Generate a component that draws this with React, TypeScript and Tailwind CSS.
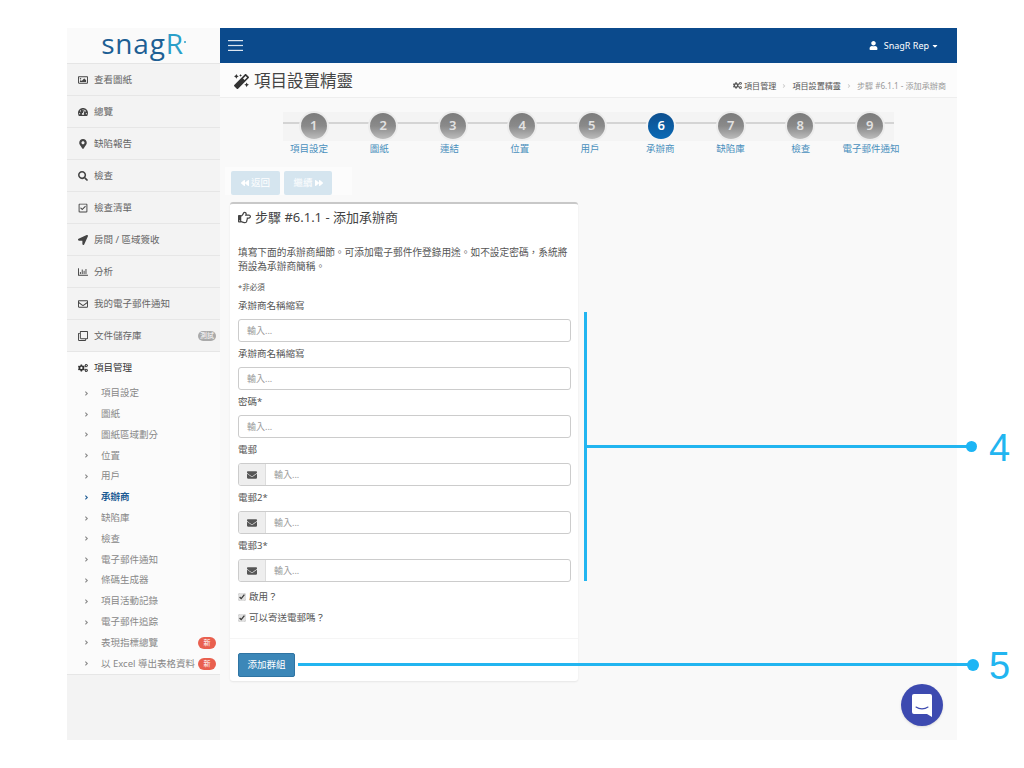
/* Add contractor step of the project wizard, with annotation callouts */
import {
  FaRegImage, FaTachometerAlt, FaMapMarkerAlt, FaSearch, FaRegCheckSquare, FaLocationArrow,
  FaRegChartBar, FaRegEnvelope, FaRegClone, FaCogs, FaMagic, FaRegHandPointRight, FaEnvelope,
  FaUser, FaCaretDown, FaAngleRight, FaBackward, FaForward,
} from "react-icons/fa";

const FONT = "font-['Noto_Sans','Noto_Sans_CJK_TC',sans-serif]";

const MENU = [
  { label: "查看圖紙", icon: FaRegImage },
  { label: "總覽", icon: FaTachometerAlt },
  { label: "缺陷報告", icon: FaMapMarkerAlt },
  { label: "檢查", icon: FaSearch },
  { label: "檢查清單", icon: FaRegCheckSquare },
  { label: "房間 / 區域簽收", icon: FaLocationArrow },
  { label: "分析", icon: FaRegChartBar },
  { label: "我的電子郵件通知", icon: FaRegEnvelope },
  { label: "文件儲存庫", icon: FaRegClone, badge: "測試" },
];

const SUBMENU = [
  { label: "項目設定" },
  { label: "圖紙" },
  { label: "圖紙區域劃分" },
  { label: "位置" },
  { label: "用戶" },
  { label: "承辦商", active: true },
  { label: "缺陷庫" },
  { label: "檢查" },
  { label: "電子郵件通知" },
  { label: "條碼生成器" },
  { label: "項目活動記錄" },
  { label: "電子郵件追踪" },
  { label: "表現指標總覽", isNew: true },
  { label: "以 Excel 導出表格資料", isNew: true },
];

const STEPS = ["項目設定", "圖紙", "連結", "位置", "用戶", "承辦商", "缺陷庫", "檢查", "電子郵件通知"];

function Sidebar() {
  return (
    <aside className="w-[153px] shrink-0 bg-[#f3f3f3]">
      <div className="h-9 flex items-center justify-center bg-[#fafafa] border-b border-[#e5e5e5]">
        <span className="text-[28px] leading-none tracking-[0.8px] text-[#1d5f94] font-['Open_Sans',sans-serif] -mt-[6px]">
          snag<span className="text-[#2a9fc9]">R</span>
        </span>
        <span className="w-[2px] h-[2px] rounded-full bg-[#2a9fc9] -mt-2" />
      </div>
      {MENU.map((m) => (
        <div key={m.label} className="h-8 flex items-center pl-[11px] pr-[4px] pt-[1px] border-b border-[#e6e6e6] text-[#666]">
          <m.icon className="w-[10px] h-[10px] text-[#444] shrink-0" />
          <span className="ml-[6px] text-[9.5px]">{m.label}</span>
          {m.badge && (
            <span className="ml-auto w-[18px] h-[10px] rounded-full bg-[#aaa] text-white text-[7px] leading-[10px] text-center">{m.badge}</span>
          )}
        </div>
      ))}
      <div className="bg-[#fbfbfb] border-b border-[#e6e6e6]">
        <div className="h-8 flex items-center pl-[11px] text-[#333]">
          <FaCogs className="w-[10px] h-[10px] text-[#333] shrink-0" />
          <span className="ml-[6px] text-[9.5px]">項目管理</span>
        </div>
        <ul className="-mt-[1px]">
          {SUBMENU.map((s) => (
            <li key={s.label} className={`h-[20.8px] flex items-center pl-[16px] pr-[4px] text-[9.5px] ${s.active ? "text-[#1d5b94] font-bold" : "text-[#888]"}`}>
              <FaAngleRight className="w-[7px] h-[7px] shrink-0" />
              <span className="ml-[11px] whitespace-nowrap">{s.label}</span>
              {s.isNew && (
                <span className="ml-auto w-[18px] h-[12px] rounded-full bg-[#e9604f] text-white text-[7px] leading-[12px] text-center shrink-0">新</span>
              )}
            </li>
          ))}
        </ul>
      </div>
    </aside>
  );
}

function Wizard() {
  return (
    <div className="relative pt-[15px] h-[69px]">
      <div className="absolute left-[63px] top-[14px] w-[611px] h-[29px] bg-[#f4f4f4]" />
      <div className="absolute left-[63px] top-[24px] w-[611px] h-[2px] bg-[#d4d4d4]" />
      <div className="relative grid grid-cols-[repeat(9,69.5px)] ml-[59px]">
        {STEPS.map((s, i) => (
          <div key={s} className="flex justify-center">
            <div
              className={`w-[26px] h-[26px] rounded-full ring-2 flex items-center justify-center text-[13px] font-semibold ${
                i === 5
                  ? "ring-[#f5f5f5] text-white bg-linear-to-b from-[#0d4f8f] to-[#0a6ab5]"
                  : "ring-[#ececec] text-[#e2e2e2] bg-linear-to-b from-[#7c7c7c] via-[#8a8a8a] to-[#bdbdbd]"
              }`}
            >
              {i + 1}
            </div>
          </div>
        ))}
      </div>
      <div className="relative grid grid-cols-[repeat(9,70.25px)] ml-[54px] mt-[3px]">
        {STEPS.map((s) => (
          <div key={s} className="text-center text-[9.5px] leading-[14px] text-[#4a90bd] whitespace-nowrap">{s}</div>
        ))}
      </div>
    </div>
  );
}

function Field({ label, email }: { label: string; email?: boolean }) {
  return (
    <div className="h-12 flex flex-col">
      <label className="h-[25px] pt-[5px] text-[9.5px] leading-[14px] text-[#555]">{label}</label>
      <div className="flex h-[23px] rounded-[3px] border border-[#ccc] bg-white overflow-hidden">
        {email && (
          <span className="w-[27px] shrink-0 bg-[#eee] border-r border-[#ddd] flex items-center justify-center">
            <FaEnvelope className="w-[10px] h-[10px] text-[#555]" />
          </span>
        )}
        <span className="pl-[8px] text-[9px] leading-[21px] text-[#999]">輸入...</span>
      </div>
    </div>
  );
}

function CheckRow({ label }: { label: string }) {
  return (
    <div className="h-[21px] flex items-center gap-[3px] text-[9.5px] text-[#555]">
      <input type="checkbox" defaultChecked className="w-2 h-2 -mt-[2px] accent-[#e0e0e0]" />
      {label}
    </div>
  );
}

function Card() {
  return (
    <section className="w-[348px] ml-[10px] mt-[7px] h-[479px] bg-white rounded-[3px] border-t-2 border-[#c8c8c8] shadow-[0_1px_2px_rgba(0,0,0,0.08)] flex flex-col">
      <h3 className="px-2 mt-[3px] h-5 flex items-center gap-1 text-[13px] leading-5 text-[#444]">
        <FaRegHandPointRight className="w-[13px] h-[13px]" />
        步驟 #6.1.1 - 添加承辦商
      </h3>
      <div className="pl-2 pr-[7px] mt-[19px]">
        <p className="text-[9.7px] leading-[14px] text-[#555]">
          填寫下面的承辦商細節。可添加電子郵件作登錄用途。如不設定密碼，系統將預設為承辦商簡稱。
        </p>
        <p className="mt-[6px] text-[7.5px] leading-[14px] text-[#555]">*非必須</p>
        <Field label="承辦商名稱縮寫" />
        <Field label="承辦商名稱縮寫" />
        <Field label="密碼*" />
        <Field label="電郵" email />
        <Field label="電郵2*" email />
        <Field label="電郵3*" email />
        <div className="mt-[5px]">
          <CheckRow label="啟用？" />
          <CheckRow label="可以寄送電郵嗎？" />
        </div>
      </div>
      <div className="mt-[9px] border-t border-[#f5f5f5] px-2 pt-[11px]">
        <button className="w-[57px] h-6 rounded-[2px] bg-[#3c87b8] border border-[#2f74a3] text-white text-[9.5px]">添加群組</button>
      </div>
    </section>
  );
}

function Callouts() {
  return (
    <>
      <div className="absolute left-[584px] top-[312px] w-[3px] h-[269px] bg-[#22b5f0]" />
      <div className="absolute left-[584px] top-[445px] w-[388px] h-[3px] bg-[#22b5f0]" />
      <div className="absolute left-[966px] top-[441px] w-[11px] h-[11px] rounded-full bg-[#1cb5f5]" />
      <div className="absolute left-[989px] top-[426px] text-[38px] leading-[44px] text-[#22b5f0] font-['Liberation_Sans',sans-serif]">4</div>
      <div className="absolute left-[298px] top-[663px] w-[674px] h-[3px] bg-[#22b5f0]" />
      <div className="absolute left-[967px] top-[659px] w-[12px] h-[12px] rounded-full bg-[#1cb5f5]" />
      <div className="absolute left-[989px] top-[644px] text-[38px] leading-[44px] text-[#22b5f0] font-['Liberation_Sans',sans-serif]">5</div>
      <div className="absolute left-[901px] top-[684px] w-[42px] h-[42px] rounded-full bg-[#3d4ab0] shadow-sm flex items-center justify-center">
        <svg viewBox="0 0 20 23" className="w-[20px] h-[23px]">
          <path d="M2 0h16a2 2 0 0 1 2 2v21l-5-3H2a2 2 0 0 1-2-2V2a2 2 0 0 1 2-2z" fill="#fff" />
          <path d="M4 13c3.500 2.500 8.500 2.500 12 0" fill="none" stroke="#3d4ab0" strokeWidth="1.1" strokeLinecap="round" />
        </svg>
      </div>
    </>
  );
}

export default function App() {
  return (
    <div className={`relative w-[1024px] h-[768px] overflow-hidden bg-white pt-7 pl-[67px] ${FONT}`}>
      <div className="w-[890px] h-[712px] flex bg-[#f9f9f9]">
        <div className="h-full bg-[#f3f3f3]">
          <Sidebar />
        </div>
        <main className="flex-1 min-w-0">
          <header className="h-[35px] bg-[#0b4a8c] flex items-center justify-between pl-2 pr-[18px] text-white">
            <svg viewBox="0 0 15 11" className="w-[15px] h-[11px]" fill="#dde6f0">
              <rect width="15" height="1.200" />
              <rect y="4.900" width="15" height="1.200" />
              <rect y="9.800" width="15" height="1.200" />
            </svg>
            <span className="flex items-center text-[9px]">
              <FaUser className="w-[9px] h-[9px] mr-[6px]" />
              SnagR Rep
              <FaCaretDown className="w-[8px] h-[8px] ml-[2px]" />
            </span>
          </header>
          <div className="h-[35px] bg-[#fcfcfc] border-b border-[#eee] flex items-center justify-between pl-[14px] pr-[11px]">
            <h1 className="flex items-center gap-[5px] pt-[3px] text-[16.5px] text-[#444]">
              <FaMagic className="w-[15px] h-[15px] text-[#333]" />
              項目設置精靈
            </h1>
            <nav className="flex items-center pt-[12px] text-[8.1px] text-[#555]">
              <span className="flex items-center gap-[2px]"><FaCogs className="w-[9px] h-[9px]" />項目管理</span>
              <FaAngleRight className="w-[6px] h-[6px] mx-[5px] text-[#ccc]" />
              <span>項目設置精靈</span>
              <FaAngleRight className="w-[6px] h-[6px] mx-[5px] text-[#ccc]" />
              <span className="text-[#999]">步驟 #6.1.1 - 添加承辦商</span>
            </nav>
          </div>
          <Wizard />
          <div className="ml-[5px] w-[127px] h-[28px] bg-[#fcfcfc] flex gap-[4px] pl-[6px] pt-[4px]">
            <button className="w-[49px] h-6 rounded-[2px] bg-[#d5e5ef] text-white text-[9.5px] flex items-center justify-center gap-[2px]">
              <FaBackward className="w-[8px] h-[8px]" />返回
            </button>
            <button className="w-[48px] h-6 rounded-[2px] bg-[#d5e5ef] text-white text-[9.5px] flex items-center justify-center gap-[2px]">
              繼續<FaForward className="w-[8px] h-[8px]" />
            </button>
          </div>
          <Card />
        </main>
      </div>
      <Callouts />
    </div>
  );
}
